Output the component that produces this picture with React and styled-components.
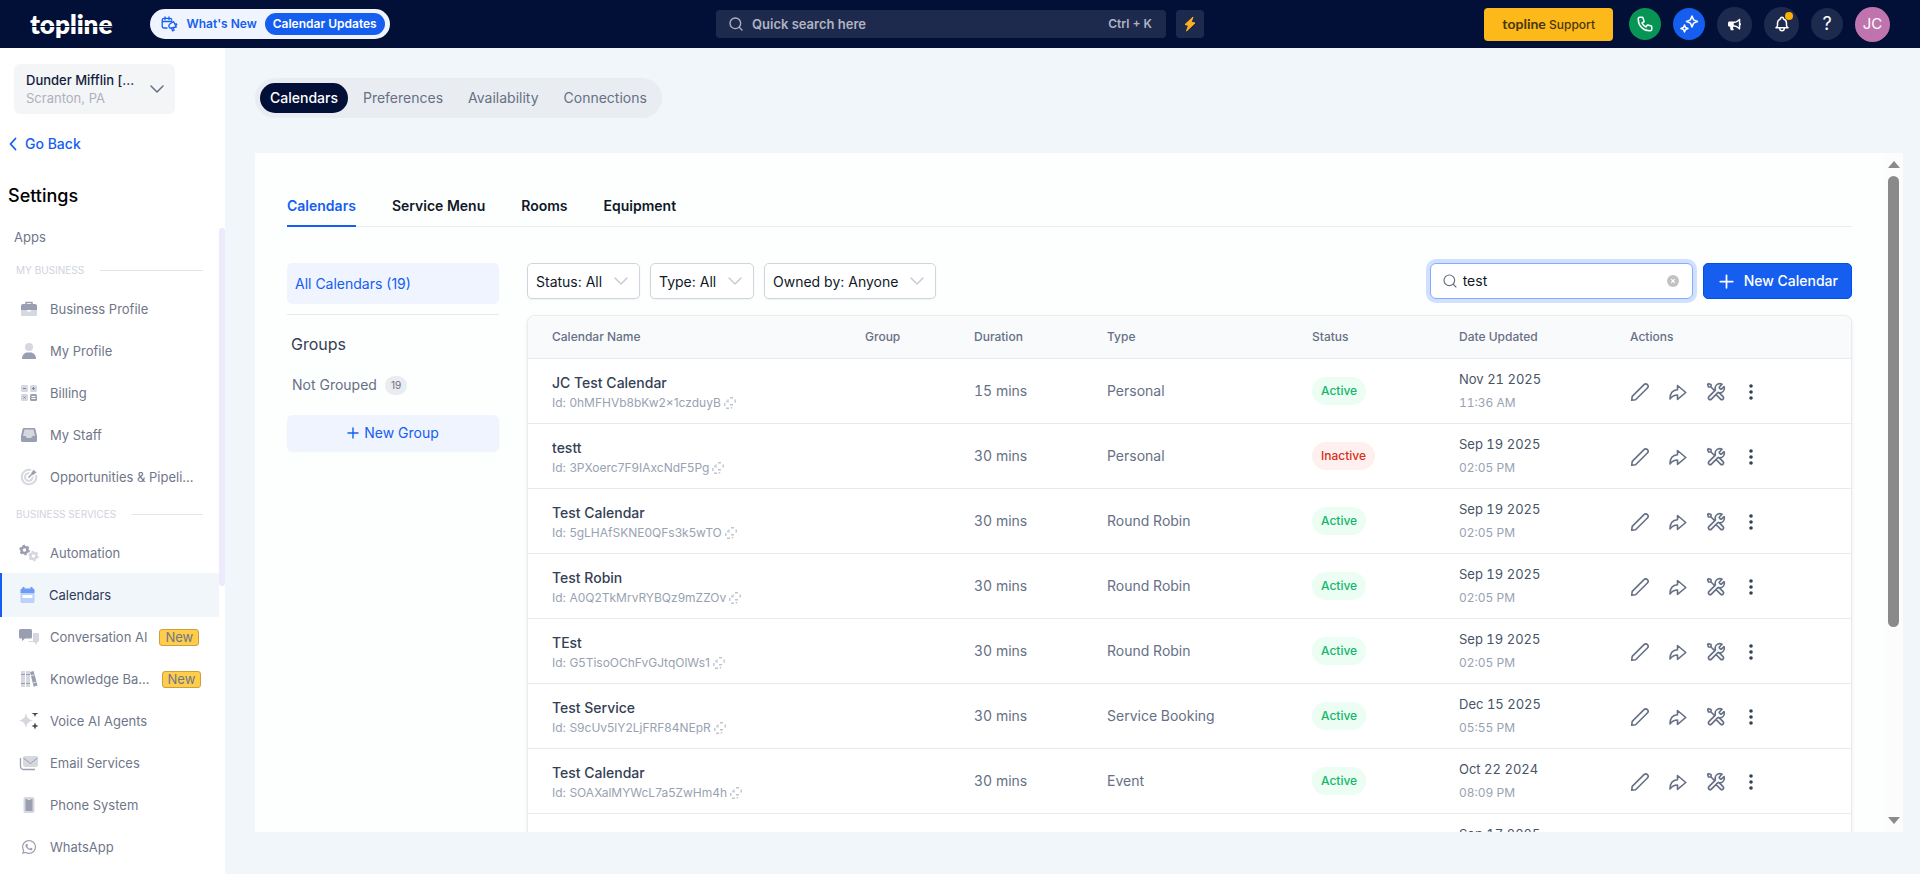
import React from "react";
import styled, { createGlobalStyle } from "styled-components";
import { FaBullhorn, FaWhatsapp } from "react-icons/fa";
import { HiOutlinePhone, HiOutlineBell } from "react-icons/hi";
import { ChevronDown, Search } from "lucide-react";

const GlobalStyle = createGlobalStyle`
  * {
    box-sizing: border-box;
  }
  body {
    margin: 0;
    font-family: Inter, "Liberation Sans", sans-serif;
    font-size: 14px;
    line-height: 20px;
    color: #101828;
    background: #f1f6fa;
  }
  button, input, select {
    font: inherit;
    color: inherit;
    margin: 0;
  }
  button {
    border: 0;
    padding: 0;
    background: none;
    cursor: pointer;
  }
  a {
    color: inherit;
    text-decoration: none;
  }
  svg {
    display: block;
    flex-shrink: 0;
  }
`;

const DARK = "#999eb0";
const LIGHT = "#d6d8df";

const navIcons = {
  briefcase: (
    <svg width="18" height="18" viewBox="0 0 18 18">
      <path d="M6 4V2.500h6V4" fill="none" stroke={DARK} strokeWidth="1.500" />
      <path d="M3 4h12a2 2 0 0 1 2 2v4H1V6a2 2 0 0 1 2-2z" fill={DARK} />
      <path d="M1 10h6v1.500h4V10h6v4.500a1.500 1.500 0 0 1-1.500 1.500h-13A1.500 1.500 0 0 1 1 14.500z" fill={LIGHT} />
    </svg>
  ),
  user: (
    <svg width="18" height="18" viewBox="0 0 18 18">
      <circle cx="9" cy="5" r="4" fill={LIGHT} />
      <path d="M2 17c0-4 2.500-6.500 5.500-6.500h3c3 0 5.500 2.500 5.500 6.500z" fill={DARK} />
    </svg>
  ),
  billing: (
    <svg width="18" height="18" viewBox="0 0 18 18">
      <rect x="1" y="1" width="7" height="7" rx="1.500" fill={LIGHT} />
      <rect x="10" y="1" width="7" height="7" rx="1.500" fill={LIGHT} />
      <rect x="1" y="10" width="7" height="7" rx="1.500" fill={LIGHT} />
      <rect x="10" y="10" width="7" height="7" rx="1.500" fill={DARK} />
      <path d="M3 4.500h3M12 4.500h3M13.500 3v3M3.500 12.500l2 2M5.500 12.500l-2 2" stroke="#8187a0" />
      <path d="M11.500 12.500h4M11.500 14.500h4" stroke="#fff" />
    </svg>
  ),
  inbox: (
    <svg width="18" height="18" viewBox="0 0 18 18">
      <path d="M4 3h10l2 8h-4l-1 2H7l-1-2H2z" fill={LIGHT} />
      <path d="M4 2h10a1.500 1.500 0 0 1 1.400 1L17 10v4.500a1.500 1.500 0 0 1-1.500 1.500h-13A1.500 1.500 0 0 1 1 14.500V10l1.600-7A1.500 1.500 0 0 1 4 2zm.5 1.500L3 10h2.500L7 12h4l1.500-2H15l-1.500-6.500z" fill={DARK} />
    </svg>
  ),
  target: (
    <svg width="18" height="18" viewBox="0 0 18 18" fill="none">
      <path d="M16 7A7.300 7.300 0 1 1 11 2" stroke={LIGHT} strokeWidth="2" />
      <path d="M12.500 8.500A3.800 3.800 0 1 1 9.500 5.300" stroke={LIGHT} strokeWidth="2" />
      <path d="M8.500 9.500l5-5" stroke={DARK} strokeWidth="1.500" />
      <path d="M11.500 4.500L14 1.500l.7 1.800 2 .7-3 2.700h-2.200z" fill={DARK} />
    </svg>
  ),
  gears: (
    <svg width="20" height="18" viewBox="0 0 20 18" fill="none">
      <circle cx="5.500" cy="6" r="3" stroke={DARK} strokeWidth="2.600" />
      <circle cx="5.500" cy="6" r="4.600" stroke={DARK} strokeWidth="1.400" strokeDasharray="2.400 2.400" />
      <circle cx="14.500" cy="12" r="3" stroke={LIGHT} strokeWidth="2.600" />
      <circle cx="14.500" cy="12" r="4.600" stroke={LIGHT} strokeWidth="1.400" strokeDasharray="2.400 2.400" />
    </svg>
  ),
  calendar: (
    <svg width="18" height="18" viewBox="0 0 18 18">
      <path d="M4.500 1v3M12.500 1v3" stroke="#6d9bf5" strokeWidth="2" />
      <path d="M3 2.500h11A1.500 1.500 0 0 1 15.500 4v3h-14V4A1.500 1.500 0 0 1 3 2.500z" fill="#6d9bf5" />
      <path d="M1.500 7h14v8.500A1.500 1.500 0 0 1 14 17H3a1.500 1.500 0 0 1-1.500-1.500z" fill="#bcd1fb" />
      <rect x="3.500" y="9" width="10" height="3" rx=".5" fill="#fff" />
    </svg>
  ),
  chat: (
    <svg width="20" height="18" viewBox="0 0 20 18">
      <path d="M9 13h5V5h4.500A1.500 1.500 0 0 1 20 6.500v6a1.500 1.500 0 0 1-1.500 1.500H18v3l-3-3h-4.500A1.500 1.500 0 0 1 9 13z" fill={LIGHT} />
      <path d="M1.500 1h10A1.500 1.500 0 0 1 13 2.500V9a1.500 1.500 0 0 1-1.500 1.500H6L3 13v-2.500H1.500A1.500 1.500 0 0 1 0 9V2.500A1.500 1.500 0 0 1 1.500 1z" fill={DARK} />
    </svg>
  ),
  books: (
    <svg width="18" height="18" viewBox="0 0 18 18">
      <path d="M1 1h4v16H1zM6 1h4v16H6z" fill={LIGHT} />
      <path d="M1 4.500h4M6 4.500h4M1 13.500h4M6 13.500h4" stroke={DARK} />
      <path d="M10 2l3.600-1L17.500 15.500l-3.800 1.300z" fill={DARK} />
      <path d="M11 5.800l3.500-1M13 13l3.500-1" stroke="#fff" strokeWidth=".7" />
    </svg>
  ),
  sparkle: (
    <svg width="22" height="18" viewBox="0 0 22 18">
      <path d="M8 1c1.200 5 2 6 7 7.500C10 10 9.200 11 8 16 6.800 11 6 10 1 8.500 6 7 6.800 6 8 1z" fill={LIGHT} />
      <path d="M13.500 1h7l-2.500 1.500-1 2.500-1-2.500zM17 10.500l1 2.500 2.500 1-2.500 1-1 2.500-1-2.500-2.500-1 2.500-1z" fill="#46494f" />
    </svg>
  ),
  mail: (
    <svg width="20" height="18" viewBox="0 0 20 18" fill="none">
      <rect x="4" y="2" width="15" height="11" rx="2" fill={LIGHT} />
      <path d="M4.500 4l7 5.500L18.500 4" stroke={DARK} />
      <path d="M1.500 4v8.500a3 3 0 0 0 3 3H16" stroke={DARK} strokeWidth="1.300" />
    </svg>
  ),
  phone: (
    <svg width="18" height="18" viewBox="0 0 18 18">
      <rect x="3.500" y="1" width="11" height="16" rx="2" fill={LIGHT} />
      <path d="M5.500 3H7l.5 1h3l.5-1h1.500v12h-7z" fill={DARK} />
    </svg>
  ),
  whatsapp: <FaWhatsapp size={16} color={DARK} />,
};

const SparklesIcon = () => (
  <svg width="20" height="20" viewBox="0 0 20 20" fill="none" stroke="#fff" strokeWidth="1.500" strokeLinejoin="round">
    <path d="M13 2l1.600 3.900L18.500 7.500l-3.900 1.600L13 13l-1.600-3.900L7.500 7.500l3.900-1.600z" />
    <path d="M5.500 11l1 2.500 2.500 1-2.500 1-1 2.500-1-2.500-2.500-1 2.500-1z" />
  </svg>
);

const BoltIcon = () => (
  <svg width="14" height="16" viewBox="0 0 14 16">
    <path d="M10 1L2 8.500l3.500 1L3.500 15 12 7 8.200 6z" fill="#fdb022" stroke="#fdb022" strokeLinejoin="round" />
  </svg>
);

const NewsIcon = () => (
  <svg width="17" height="17" viewBox="0 0 17 17" fill="none" stroke="#155eef" strokeWidth="1.300" strokeLinecap="round" strokeLinejoin="round">
    <path d="M6 12H3a1.800 1.800 0 0 1-1.800-1.800V4A1.800 1.800 0 0 1 3 2.300h6A1.800 1.800 0 0 1 10.800 4M1.200 5.500h9.300M4 1v2.500M8 1v2.500" />
    <path d="M8.500 8.200l4-2.700 2.800 5.500-4.600.8-2 .2-1-2zM10.500 12l1 2.800 1.600-.6-.8-2.700M15 7.500l.8 1.400" />
  </svg>
);

const BackIcon = () => (
  <svg width="8" height="14" viewBox="0 0 8 14" fill="none" stroke="#155eef" strokeWidth="1.800" strokeLinecap="round" strokeLinejoin="round">
    <path d="M6.500 1.500L1.500 7l5 5.500" />
  </svg>
);

const PlusIcon = ({ size }) => (
  <svg width={size} height={size} viewBox="0 0 12 12" fill="none" stroke="currentColor" strokeWidth="1.400" strokeLinecap="round">
    <path d="M6 1v10M1 6h10" />
  </svg>
);

const PencilIcon = () => (
  <svg width="20" height="20" viewBox="0 0 20 20" fill="none" stroke="#667085" strokeWidth="1.600" strokeLinejoin="round">
    <path d="M1.700 18.300l.5-3.900L14 2.600a2.400 2.400 0 0 1 3.400 3.400L5.600 17.800z" />
  </svg>
);

const ShareIcon = () => (
  <svg width="20" height="20" viewBox="0 0 20 20" fill="none" stroke="#667085" strokeWidth="1.600" strokeLinejoin="round">
    <path d="M2 17c0-6 2.500-9 7.500-9.200V3.500L17.800 10.500 9.500 17.300V13C6 13 4 14.300 2 17z" />
  </svg>
);

const ToolsIcon = () => (
  <svg width="20" height="20" viewBox="0 0 24 24" fill="none" stroke="#667085" strokeWidth="2" strokeLinecap="round" strokeLinejoin="round">
    <path d="M6 6L10.500 10.500M6 6H3L2 3L3 2L6 3V6ZM19.259 2.741L16.631 5.369C16.235 5.765 16.037 5.963 15.963 6.191C15.898 6.392 15.898 6.608 15.963 6.809C16.037 7.037 16.235 7.235 16.631 7.631L16.869 7.869C17.265 8.265 17.463 8.463 17.691 8.537C17.892 8.602 18.108 8.602 18.309 8.537C18.537 8.463 18.735 8.265 19.131 7.869L21.589 5.411C21.854 6.055 22 6.760 22 7.500C22 10.538 19.538 13 16.500 13C16.134 13 15.776 12.964 15.430 12.896C14.944 12.800 14.700 12.752 14.553 12.767C14.396 12.782 14.319 12.806 14.180 12.880C14.050 12.950 13.919 13.081 13.657 13.343L6.500 20.500C5.672 21.328 4.328 21.328 3.500 20.500C2.672 19.672 2.672 18.328 3.500 17.500L10.657 10.343C10.919 10.081 11.050 9.950 11.120 9.819C11.194 9.681 11.218 9.603 11.233 9.447C11.248 9.299 11.200 9.056 11.104 8.570C11.036 8.224 11 7.866 11 7.500C11 4.462 13.462 2 16.500 2C17.506 2 18.448 2.270 19.259 2.741ZM12 15L17.500 20.500C18.328 21.328 19.672 21.328 20.500 20.500C21.328 19.672 21.328 18.328 20.500 17.500L15.975 12.975C15.655 12.945 15.343 12.887 15.041 12.804C14.652 12.698 14.225 12.775 13.940 13.060L12 15Z" />
  </svg>
);

const DotsIcon = () => (
  <svg width="14" height="18" viewBox="0 0 14 18" fill="#344054">
    <circle cx="7" cy="3" r="1.800" />
    <circle cx="7" cy="9" r="1.800" />
    <circle cx="7" cy="15" r="1.800" />
  </svg>
);

const CopyIcon = () => (
  <svg width="12" height="12" viewBox="0 0 12 12" fill="none" stroke="#c0c4cf" strokeWidth="1.400">
    <path d="M6 .8h3M11.200 2.500v3M6 7.800h3M4 2.500v3" />
    <path d="M.8 9V6M2 11.200h3M7.500 10v1.500M2 4.500h1" />
  </svg>
);

const ClearIcon = () => (
  <svg width="12" height="12" viewBox="0 0 12 12">
    <circle cx="6" cy="6" r="6" fill="#c2c2c2" />
    <path d="M4.200 4.200l3.600 3.600M7.800 4.200L4.200 7.800" stroke="#fff" strokeWidth="1.200" />
  </svg>
);

const businessItems = [
  { icon: "briefcase", label: "Business Profile" },
  { icon: "user", label: "My Profile" },
  { icon: "billing", label: "Billing" },
  { icon: "inbox", label: "My Staff" },
  { icon: "target", label: "Opportunities & Pipeli..." },
];

const serviceItems = [
  { icon: "gears", label: "Automation" },
  { icon: "calendar", label: "Calendars", active: true },
  { icon: "chat", label: "Conversation AI", isNew: true },
  { icon: "books", label: "Knowledge Ba...", isNew: true },
  { icon: "sparkle", label: "Voice AI Agents" },
  { icon: "mail", label: "Email Services" },
  { icon: "phone", label: "Phone System" },
  { icon: "whatsapp", label: "WhatsApp" },
];

const calendars = [
  { name: "JC Test Calendar", id: "0hMFHVb8bKw2x1czduyB", duration: "15 mins", type: "Personal", status: "Active", date: "Nov 21 2025", time: "11:36 AM" },
  { name: "testt", id: "3PXoerc7F9IAxcNdF5Pg", duration: "30 mins", type: "Personal", status: "Inactive", date: "Sep 19 2025", time: "02:05 PM" },
  { name: "Test Calendar", id: "5gLHAfSKNE0QFs3k5wTO", duration: "30 mins", type: "Round Robin", status: "Active", date: "Sep 19 2025", time: "02:05 PM" },
  { name: "Test Robin", id: "A0Q2TkMrvRYBQz9mZZOv", duration: "30 mins", type: "Round Robin", status: "Active", date: "Sep 19 2025", time: "02:05 PM" },
  { name: "TEst", id: "G5TisoOChFvGJtqOlWs1", duration: "30 mins", type: "Round Robin", status: "Active", date: "Sep 19 2025", time: "02:05 PM" },
  { name: "Test Service", id: "S9cUv5lY2LjFRF84NEpR", duration: "30 mins", type: "Service Booking", status: "Active", date: "Dec 15 2025", time: "05:55 PM" },
  { name: "Test Calendar", id: "SOAXalMYWcL7a5ZwHm4h", duration: "30 mins", type: "Event", status: "Active", date: "Oct 22 2024", time: "08:09 PM" },
  { name: "Test", id: "k2VbQ8sLrT0yPzWn4XcE", duration: "30 mins", type: "Event", status: "Active", date: "Sep 17 2025", time: "02:05 PM" },
];

const columns = [
  { label: "Calendar Name", width: 313 },
  { label: "Group", width: 109 },
  { label: "Duration", width: 133 },
  { label: "Type", width: 205 },
  { label: "Status", width: 147 },
  { label: "Date Updated", width: 171 },
  { label: "Actions", width: 245 },
];

const TopBar = () => (
  <Header>
    <HeaderLeft>
      <Logo href="#">topline</Logo>
      <WhatsNew href="#">
        <NewsIcon />
        What's New
        <UpdatePill>Calendar Updates</UpdatePill>
      </WhatsNew>
    </HeaderLeft>
    <HeaderCenter>
      <QuickSearch>
        <Search size={16} />
        Quick search here
        <Shortcut>Ctrl + K</Shortcut>
      </QuickSearch>
      <BoltButton aria-label="Quick actions">
        <BoltIcon />
      </BoltButton>
    </HeaderCenter>
    <HeaderRight>
      <SupportButton>
        <b>topline</b> Support
      </SupportButton>
      <RoundButton $bg="#079455" aria-label="Phone">
        <HiOutlinePhone size={18} />
      </RoundButton>
      <RoundButton $bg="#155eef" aria-label="Ask AI">
        <SparklesIcon />
      </RoundButton>
      <RoundButton $large aria-label="Announcements">
        <FaBullhorn size={13} />
      </RoundButton>
      <RoundButton $large aria-label="Notifications">
        <HiOutlineBell size={18} />
        <Dot />
      </RoundButton>
      <RoundButton $help aria-label="Help">
        ?
      </RoundButton>
      <RoundButton $large $bg="#c074ad" aria-label="Account">
        JC
      </RoundButton>
    </HeaderRight>
  </Header>
);

const NavList = ({ items }) => (
  <List>
    {items.map((item) => (
      <li key={item.label}>
        <NavLink href="#" $active={item.active}>
          <NavIcon>{navIcons[item.icon]}</NavIcon>
          {item.label}
          {item.isNew && <NewTag>New</NewTag>}
        </NavLink>
      </li>
    ))}
  </List>
);

const Sidebar = () => (
  <Aside>
    <Account>
      <AccountText>
        <AccountName>Dunder Mifflin [...</AccountName>
        <AccountPlace>Scranton, PA</AccountPlace>
      </AccountText>
      <ChevronDown size={24} strokeWidth={1.5} color="#667085" />
    </Account>
    <BackLink href="#">
      <BackIcon />
      Go Back
    </BackLink>
    <SideTitle>Settings</SideTitle>
    <SideScroll>
      <SideNav>
        <AppsLink href="#">Apps</AppsLink>
        <SectionTitle>MY BUSINESS</SectionTitle>
        <NavList items={businessItems} />
        <SectionTitle>BUSINESS SERVICES</SectionTitle>
        <NavList items={serviceItems} />
      </SideNav>
      <SideThumb />
    </SideScroll>
  </Aside>
);

const Filter = ({ label }) => (
  <FilterBox>
    <select aria-label={label}>
      <option>{label}</option>
    </select>
    <ChevronDown size={24} strokeWidth={1.5} color="#c9ccd6" />
  </FilterBox>
);

const CalendarRow = ({ row }) => (
  <tr>
    <NameCell>
      <Name href="#">{row.name}</Name>
      <IdLine>
        Id: {row.id}
        <button aria-label="Copy id">
          <CopyIcon />
        </button>
      </IdLine>
    </NameCell>
    <Cell />
    <Cell>{row.duration}</Cell>
    <Cell>{row.type}</Cell>
    <Cell>
      <Status $inactive={row.status === "Inactive"}>{row.status}</Status>
    </Cell>
    <Cell>
      <DateText>{row.date}</DateText>
      <TimeText>{row.time}</TimeText>
    </Cell>
    <Cell>
      <Actions>
        <button aria-label="Edit">
          <PencilIcon />
        </button>
        <button aria-label="Share">
          <ShareIcon />
        </button>
        <button aria-label="Configure">
          <ToolsIcon />
        </button>
        <button aria-label="More">
          <DotsIcon />
        </button>
      </Actions>
    </Cell>
  </tr>
);

const App = () => {
  return (
    <Page>
      <GlobalStyle />
      <TopBar />
      <Body>
        <Sidebar />
        <Main>
          <PillTabs>
            <PillTab $active>Calendars</PillTab>
            <PillTab>Preferences</PillTab>
            <PillTab>Availability</PillTab>
            <PillTab>Connections</PillTab>
          </PillTabs>
          <Panel>
            <PanelContent>
              <Tabs>
                <Tab $active>Calendars</Tab>
                <Tab>Service Menu</Tab>
                <Tab>Rooms</Tab>
                <Tab>Equipment</Tab>
              </Tabs>
              <Columns>
                <Groups>
                  <AllCalendars>All Calendars (19)</AllCalendars>
                  <GroupsTitle>Groups</GroupsTitle>
                  <NotGrouped>
                    Not Grouped <Count>19</Count>
                  </NotGrouped>
                  <NewGroup>
                    <PlusIcon size={12} />
                    New Group
                  </NewGroup>
                </Groups>
                <Content>
                  <Toolbar>
                    <Filter label="Status: All" />
                    <Filter label="Type: All" />
                    <Filter label="Owned by: Anyone" />
                    <SearchBox>
                      <Search size={16} strokeWidth={1.75} color="#667085" />
                      <input aria-label="Search calendars" defaultValue="test" />
                      <button aria-label="Clear search">
                        <ClearIcon />
                      </button>
                    </SearchBox>
                    <NewCalendar>
                      <PlusIcon size={15} />
                      New Calendar
                    </NewCalendar>
                  </Toolbar>
                  <TableCard>
                    <Table>
                      <colgroup>
                        {columns.map((col) => (
                          <Col key={col.label} $width={col.width} />
                        ))}
                      </colgroup>
                      <thead>
                        <tr>
                          {columns.map((col) => (
                            <HeadCell key={col.label}>{col.label}</HeadCell>
                          ))}
                        </tr>
                      </thead>
                      <tbody>
                        {calendars.map((row) => (
                          <CalendarRow key={row.id} row={row} />
                        ))}
                      </tbody>
                    </Table>
                  </TableCard>
                </Content>
              </Columns>
            </PanelContent>
            <Scrollbar>
              <Arrow />
              <Thumb />
              <Arrow $down />
            </Scrollbar>
          </Panel>
        </Main>
      </Body>
    </Page>
  );
};

export default App;

const Page = styled.div`
  height: 100vh;
  display: flex;
  flex-direction: column;
  overflow: hidden;
`;
const Header = styled.header`
  flex: none;
  height: 48px;
  padding: 0 30px;
  display: flex;
  align-items: center;
  background: #020f36;
  color: #fff;
`;
const HeaderLeft = styled.div`
  flex: 1;
  display: flex;
  align-items: center;
  gap: 38px;
`;
const HeaderCenter = styled.div`
  display: flex;
  gap: 10px;
`;
const HeaderRight = styled.div`
  flex: 1;
  display: flex;
  align-items: center;
  justify-content: flex-end;
  gap: 12px;
`;
const Logo = styled.a`
  position: relative;
  font-family: Lato, sans-serif;
  font-size: 26px;
  font-weight: 800;
  line-height: 30px;
  &::after {
    content: "";
    position: absolute;
    left: 0;
    right: 0;
    top: 17px;
    height: 1px;
    background: #020f36;
  }
`;
const WhatsNew = styled.a`
  height: 30px;
  padding: 0 5px 0 11px;
  display: flex;
  align-items: center;
  gap: 8px;
  border-radius: 15px;
  background: #eff4ff;
  color: #155eef;
  font-size: 12px;
  font-weight: 600;
`;
const UpdatePill = styled.span`
  padding: 0 8px;
  line-height: 22px;
  border-radius: 11px;
  background: #155eef;
  color: #fff;
`;
const QuickSearch = styled.button`
  width: 450px;
  height: 28px;
  padding: 0 14px 0 12px;
  display: flex;
  align-items: center;
  gap: 8px;
  border-radius: 4px;
  background: #1e2a4d;
  color: #b0b4c1;
  font-size: 13px;
  font-weight: 600;
`;
const Shortcut = styled.span`
  margin-left: auto;
  font-size: 12px;
`;
const BoltButton = styled.button`
  width: 28px;
  height: 28px;
  display: flex;
  align-items: center;
  justify-content: center;
  border-radius: 4px;
  background: #1e2a4d;
`;
const SupportButton = styled.button`
  height: 33px;
  margin-right: 4px;
  padding: 0 18px;
  border-radius: 4px;
  background: #fdb81a;
  color: #47370f;
  font-size: 12px;
  font-weight: 500;
  b {
    font-family: Lato, sans-serif;
    font-size: 14px;
    font-weight: 700;
  }
`;
const RoundButton = styled.button`
  position: relative;
  width: ${(props) => (props.$large ? 35 : 32)}px;
  height: ${(props) => (props.$large ? 35 : 32)}px;
  display: flex;
  align-items: center;
  justify-content: center;
  border-radius: 50%;
  background: ${(props) => props.$bg || "#1e2a4d"};
  font-size: ${(props) => (props.$help ? 18 : 15)}px;
`;
const Dot = styled.span`
  position: absolute;
  top: 5px;
  right: 6px;
  width: 8px;
  height: 8px;
  border-radius: 50%;
  background: #fdb100;
`;

const Body = styled.div`
  flex: 1;
  min-height: 0;
  display: flex;
`;
const Aside = styled.aside`
  flex: none;
  width: 225px;
  display: flex;
  flex-direction: column;
  background: #fff;
`;
const Account = styled.button`
  height: 50px;
  margin: 16px 50px 0 14px;
  padding: 0 6px 0 12px;
  display: flex;
  align-items: center;
  justify-content: space-between;
  border-radius: 6px;
  background: #f4f5f7;
  text-align: left;
`;
const AccountText = styled.span`
  display: flex;
  flex-direction: column;
  font-size: 13px;
  line-height: 18px;
  white-space: nowrap;
`;
const AccountName = styled.span`
  font-weight: 500;
  color: #111c40;
`;
const AccountPlace = styled.span`
  color: #adb1bf;
`;
const BackLink = styled.a`
  margin: 20px 0 0 9px;
  display: flex;
  align-items: center;
  gap: 8px;
  color: #155eef;
  font-weight: 500;
`;
const SideTitle = styled.h1`
  margin: 30px 0 20px 8px;
  font-size: 18px;
  line-height: 24px;
  font-weight: 500;
  color: #000;
`;
const SideScroll = styled.div`
  flex: 1;
  min-height: 0;
  display: flex;
  align-items: flex-start;
  overflow: hidden;
`;
const SideNav = styled.nav`
  flex: 1;
  min-width: 0;
`;
const SideThumb = styled.div`
  width: 6px;
  height: 358px;
  border-radius: 3px;
  background: #edeafe;
`;
const AppsLink = styled.a`
  display: block;
  padding: 0 0 8px 14px;
  font-size: 13px;
  line-height: 18px;
  color: #6f7689;
`;
const SectionTitle = styled.h2`
  margin: 0;
  padding: 8px 16px 10px;
  display: flex;
  align-items: center;
  gap: 16px;
  font-size: 10px;
  font-weight: 400;
  line-height: 16px;
  color: #cfd3de;
  &::after {
    content: "";
    flex: 1;
    height: 1px;
    background: #e3e5e9;
  }
`;
const List = styled.ul`
  list-style: none;
  margin: 0;
  padding: 0;
`;
const NavLink = styled.a`
  height: ${(props) => (props.$active ? 44 : 42)}px;
  margin: ${(props) => (props.$active ? "-1px 0" : 0)};
  padding: ${(props) => (props.$active ? "0 16px 0 15px" : "0 16px 0 18px")};
  display: flex;
  align-items: center;
  border-left: ${(props) => (props.$active ? "2px solid #155eef" : 0)};
  background: ${(props) => (props.$active ? "#f1f6fa" : "none")};
  color: ${(props) => (props.$active ? "#2f3a58" : "#6f7689")};
  font-size: 13px;
  white-space: nowrap;
`;
const NavIcon = styled.span`
  flex: none;
  width: 22px;
  margin-right: 10px;
  display: flex;
  justify-content: center;
`;
const NewTag = styled.span`
  flex: none;
  margin-left: 12px;
  padding: 0 5px;
  border: 1px solid #c9a23d;
  border-radius: 3px;
  background: #ffcd4a;
  line-height: 15px;
`;

const Main = styled.main`
  flex: 1;
  min-width: 0;
  padding: 30px 17px 42px 30px;
  display: flex;
  flex-direction: column;
  align-items: flex-start;
`;
const PillTabs = styled.div`
  padding: 5px;
  display: flex;
  gap: 5px;
  border-radius: 20px;
  background: #e9edf1;
`;
const PillTab = styled.button`
  height: 30px;
  padding: 0 10px;
  border-radius: 15px;
  font-weight: ${(props) => (props.$active ? 500 : 400)};
  background: ${(props) => (props.$active ? "#020f36" : "none")};
  color: ${(props) => (props.$active ? "#fff" : "#667085")};
`;
const Panel = styled.section`
  flex: 1;
  min-height: 0;
  align-self: stretch;
  margin-top: 35px;
  display: flex;
  overflow: hidden;
  background: #fdfefe;
`;
const PanelContent = styled.div`
  flex: 1;
  min-width: 0;
  padding: 43px 32px 0;
`;
const Tabs = styled.div`
  display: flex;
  gap: 36px;
  box-shadow: inset 0 -1px #eaecf5;
`;
const Tab = styled.button`
  padding-bottom: 9px;
  border-bottom: 2px solid ${(props) => (props.$active ? "#155eef" : "transparent")};
  color: ${(props) => (props.$active ? "#155eef" : "#101828")};
  font-weight: 600;
`;
const Columns = styled.div`
  margin-top: 36px;
  display: flex;
  align-items: flex-start;
  gap: 28px;
`;
const Groups = styled.div`
  flex: none;
  width: 212px;
  display: flex;
  flex-direction: column;
`;
const AllCalendars = styled.button`
  height: 41px;
  padding: 0 8px;
  border-radius: 5px;
  background: #eff4ff;
  color: #155eef;
  text-align: left;
`;
const GroupsTitle = styled.h3`
  margin: 10px 0 0;
  padding: 17px 4px 19px;
  border-top: 1px solid #e9eaed;
  font-size: 16px;
  font-weight: 400;
  line-height: 24px;
  color: #344054;
`;
const NotGrouped = styled.button`
  padding: 0 5px;
  display: flex;
  align-items: center;
  gap: 8px;
  color: #667085;
`;
const Count = styled.span`
  padding: 0 6px;
  border-radius: 10px;
  background: #eaecf0;
  font-size: 10px;
  line-height: 19px;
`;
const NewGroup = styled.button`
  height: 36px;
  margin-top: 20px;
  display: flex;
  align-items: center;
  justify-content: center;
  gap: 5px;
  border-radius: 6px;
  background: #eff4ff;
  box-shadow: 0 1px 2px rgba(16, 24, 40, 0.05);
  color: #155eef;
`;
const Content = styled.div`
  flex: 1;
  min-width: 0;
`;
const Toolbar = styled.div`
  display: flex;
  gap: 10px;
`;
const FilterBox = styled.div`
  height: 36px;
  padding: 0 6px 0 8px;
  display: flex;
  align-items: center;
  gap: 6px;
  border: 1px solid #d0d5dd;
  border-radius: 5px;
  background: #fff;
  box-shadow: 0 1px 2px rgba(16, 24, 40, 0.05);
  select {
    appearance: none;
    border: 0;
    padding: 1px 0 0;
    background: none;
    outline: 0;
  }
`;
const SearchBox = styled.div`
  width: 263px;
  height: 36px;
  margin-left: auto;
  padding: 0 13px 0 11px;
  display: flex;
  align-items: center;
  gap: 5px;
  border: 1px solid #84adff;
  border-radius: 6px;
  background: #fff;
  box-shadow: 0 0 0 4px #d1e0ff;
  input {
    flex: 1;
    min-width: 0;
    border: 0;
    padding: 0;
    outline: 0;
    background: none;
  }
`;
const NewCalendar = styled.button`
  height: 36px;
  padding: 0 13px 0 15px;
  display: flex;
  align-items: center;
  gap: 10px;
  border: 1px solid #004eeb;
  border-radius: 5px;
  background: #155eef;
  color: #fff;
  font-weight: 500;
`;
const TableCard = styled.div`
  margin-top: 16px;
  border: 1px solid #eaecf0;
  border-radius: 8px 8px 0 0;
  overflow: hidden;
  background: #fff;
  box-shadow: 0 1px 3px rgba(16, 24, 40, 0.1);
`;
const Table = styled.table`
  width: 100%;
  table-layout: fixed;
  border-collapse: separate;
  border-spacing: 0;
`;
const Col = styled.col`
  width: ${(props) => props.$width}px;
`;
const HeadCell = styled.th`
  height: 43px;
  padding: 0 24px;
  border-bottom: 1px solid #e9eaed;
  background: #f9fafb;
  color: #667085;
  font-size: 12px;
  font-weight: 500;
  text-align: left;
`;
const Cell = styled.td`
  height: 65px;
  padding: 0 24px;
  border-bottom: 1px solid #e9eaed;
  color: #667085;
  font-variant-numeric: tabular-nums;
`;
const NameCell = styled(Cell)`
  padding-top: 4px;
  font-variant-numeric: normal;
`;
const Name = styled.a`
  display: block;
  color: #344054;
  font-weight: 500;
`;
const IdLine = styled.div`
  display: flex;
  align-items: center;
  gap: 3px;
  font-size: 12px;
  color: #98a2b3;
  white-space: nowrap;
`;
const Status = styled.span`
  display: inline-block;
  padding: 0 9px;
  border-radius: 14px;
  font-size: 12px;
  font-weight: 500;
  line-height: 28px;
  background: ${(props) => (props.$inactive ? "#fef0ee" : "#ecfdf3")};
  color: ${(props) => (props.$inactive ? "#d92d20" : "#12b76a")};
`;
const DateText = styled.div`
  font-size: 13px;
  line-height: 23px;
  color: #475467;
`;
const TimeText = styled.div`
  font-size: 12px;
  line-height: 23px;
  color: #98a2b3;
`;
const Actions = styled.div`
  padding-top: 2px;
  display: flex;
  align-items: center;
  gap: 18px;
`;
const Scrollbar = styled.div`
  flex: none;
  width: 19px;
  padding: 8px 0;
  display: flex;
  flex-direction: column;
  align-items: center;
  background: #fcfcfc;
`;
const Arrow = styled.div`
  border: 6px solid transparent;
  border-top: ${(props) => (props.$down ? "7px solid #8a8a8a" : 0)};
  border-bottom: ${(props) => (props.$down ? 0 : "7px solid #8a8a8a")};
  margin-top: ${(props) => (props.$down ? "auto" : 0)};
`;
const Thumb = styled.div`
  width: 11px;
  height: 68%;
  margin-top: 8px;
  border-radius: 6px;
  background: #8a8a8a;
`;
